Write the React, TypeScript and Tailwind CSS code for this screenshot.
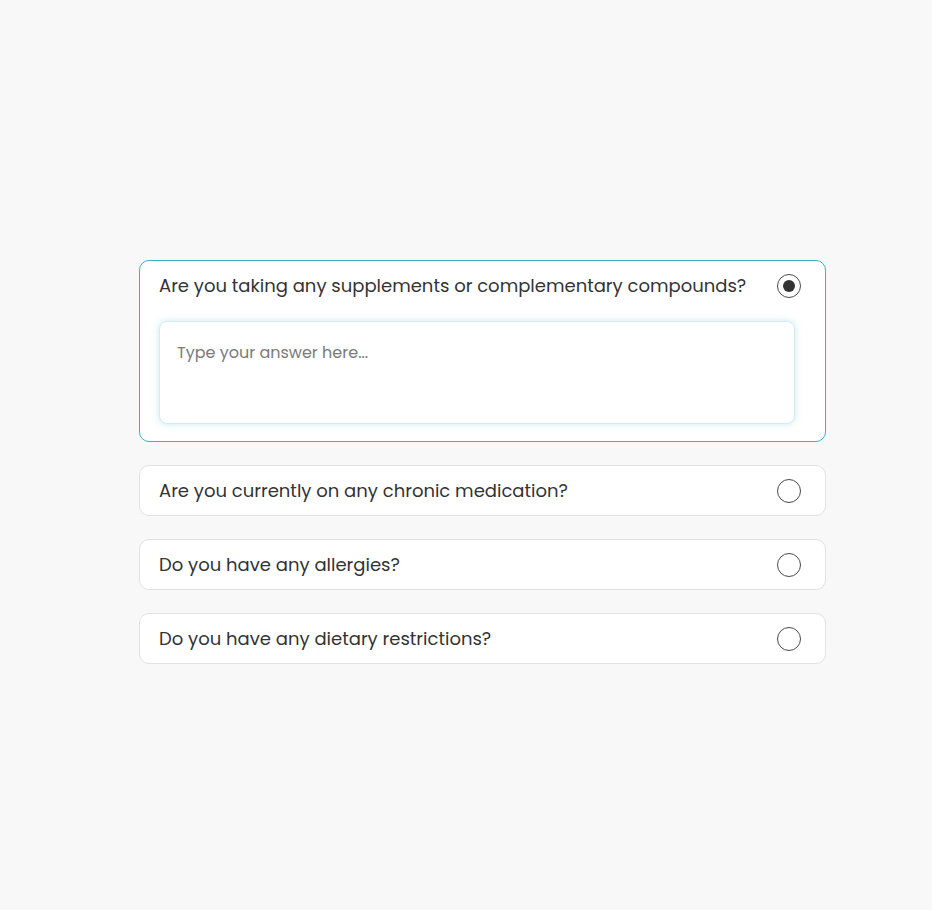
import { useState } from "react";

const QUESTIONS = [
  "Are you taking any supplements or complementary compounds?",
  "Are you currently on any chronic medication?",
  "Do you have any allergies?",
  "Do you have any dietary restrictions?",
];

function Radio({ checked }: { checked: boolean }) {
  return (
    <span className="flex h-6 w-6 shrink-0 items-center justify-center rounded-full border border-[#4a4a4a] bg-white">
      {checked && <span className="h-3 w-3 rounded-full bg-[#333333]" />}
    </span>
  );
}

export default function App() {
  const [active, setActive] = useState(0);
  const [answers, setAnswers] = useState<string[]>(["", "", "", ""]);

  return (
    <div
      className="min-h-[910px] bg-[#f8f8f8] pt-[260px] text-[#333333]"
      style={{ fontFamily: "Poppins, 'Open Sans', sans-serif" }}
    >
      <div className="ml-[139px] flex w-[687px] flex-col gap-[23px]">
        {QUESTIONS.map((q, i) => {
          const open = i === active;
          return (
            <div
              key={q}
              className={`rounded-[10px] border bg-white ${
                open ? "border-[#3fb1c6] pb-[17px]" : "border-[#e2e2e2]"
              }`}
            >
              <button
                onClick={() => setActive(i)}
                className="flex h-[49px] w-full items-center justify-between pl-[19px] pr-6 text-left"
              >
                <span className="text-[18px] leading-6">{q}</span>
                <Radio checked={open} />
              </button>
              {open && (
                <div className="pl-[19px] pr-[30px] pt-[11px]">
                  <textarea
                    value={answers[i]}
                    onChange={(e) => {
                      const next = [...answers];
                      next[i] = e.target.value;
                      setAnswers(next);
                    }}
                    placeholder="Type your answer here..."
                    className="block h-[103px] w-full resize-none rounded-lg border border-[#d2ecf3] bg-white px-[17px] pt-[19px] pb-[17px] text-[16px] leading-6 text-[#333] shadow-[0_0_7px_rgba(63,177,198,0.28)] outline-none placeholder:text-[#7a7a7a]"
                  />
                </div>
              )}
            </div>
          );
        })}
      </div>
    </div>
  );
}
